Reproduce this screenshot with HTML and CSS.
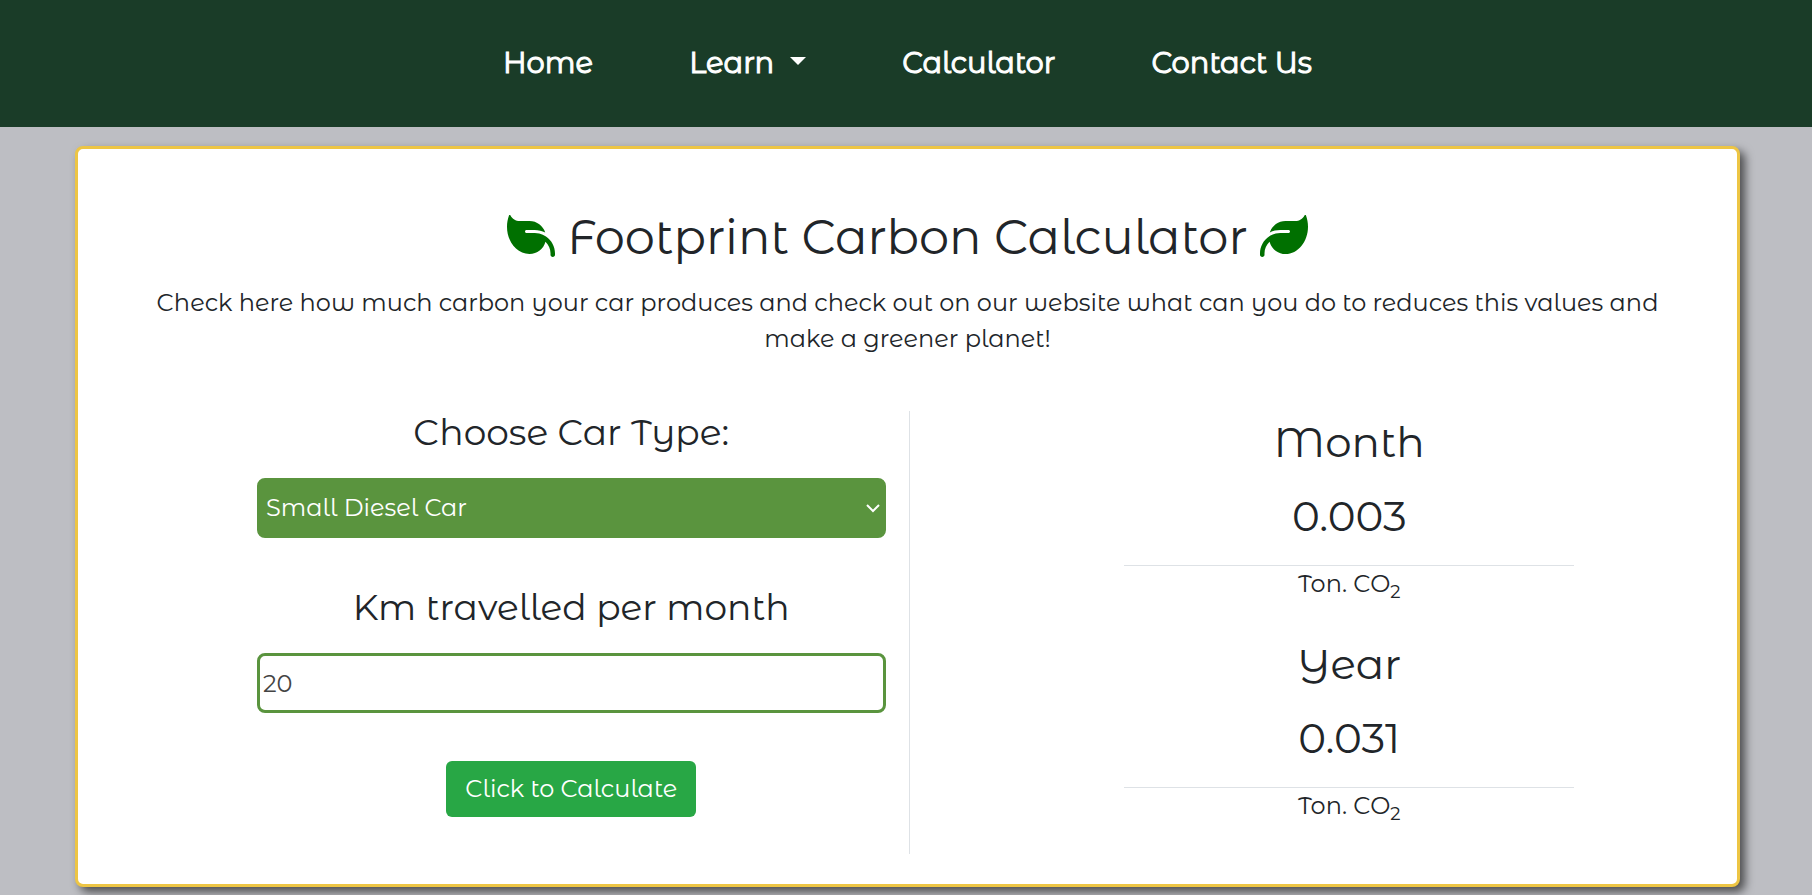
FILE: index.html
```html
<!DOCTYPE html>
<html lang="en">
<head>
<meta charset="utf-8">
<title>Footprint Carbon Calculator</title>
<link rel="stylesheet" href="styles.css">
</head>
<body>
<nav class="navbar">
  <a class="nav-link" href="#">Home</a>
  <a class="nav-link dropdown" href="#">Learn</a>
  <a class="nav-link" href="#">Calculator</a>
  <a class="nav-link" href="#">Contact Us</a>
</nav>
<main class="page">
  <section class="card">
    <h1 class="title">
      <svg class="leaf leaf-flipped" viewBox="0 0 512 512" aria-hidden="true"><path d="M272 96c-78.600 0-145.100 51.500-167.700 122.500c33.600-17 71.500-26.500 111.700-26.500h88c8.800 0 16 7.200 16 16s-7.200 16-16 16H216c-16.600 0-32.700 1.900-48.300 5.400c-25.900 5.900-49.900 16.400-71.400 30.700C38.300 298.800 0 364.900 0 440v16c0 13.300 10.700 24 24 24s24-10.700 24-24v-16c0-48.700 20.700-92.500 53.800-123.200C121.600 392.300 190.300 448 272 448l1 0c132.100-.7 239-130.900 239-291.400c0-42.600-7.500-83.100-21.100-119.600c-2.600-6.900-12.700-6.600-16.200-.1C455.900 72.100 418.700 96 376 96z"/></svg>
      <span>Footprint Carbon Calculator</span>
      <svg class="leaf" viewBox="0 0 512 512" aria-hidden="true"><path d="M272 96c-78.600 0-145.100 51.500-167.700 122.500c33.600-17 71.500-26.500 111.700-26.500h88c8.800 0 16 7.200 16 16s-7.200 16-16 16H216c-16.600 0-32.700 1.900-48.300 5.400c-25.900 5.900-49.900 16.400-71.400 30.700C38.300 298.800 0 364.900 0 440v16c0 13.300 10.700 24 24 24s24-10.700 24-24v-16c0-48.700 20.700-92.500 53.800-123.200C121.600 392.300 190.300 448 272 448l1 0c132.100-.7 239-130.900 239-291.400c0-42.600-7.500-83.100-21.100-119.600c-2.600-6.900-12.700-6.600-16.200-.1C455.900 72.100 418.700 96 376 96z"/></svg>
    </h1>
    <p class="intro">Check here how much carbon your car produces and check out on our website what can you do to reduces this values and make a greener planet!</p>
    <div class="columns">
      <form class="inputs">
        <label class="label" for="car">Choose Car Type:</label>
        <div class="select-wrap">
          <select class="field select" id="car"><option>Small Diesel Car</option></select>
          <svg class="chevron" viewBox="0 0 14 10" aria-hidden="true"><path d="M1 2l6 6 6-6"/></svg>
        </div>
        <label class="label" for="km">Km travelled per month</label>
        <input class="field number" id="km" type="number" value="20">
        <button class="submit" type="button">Click to Calculate</button>
      </form>
      <div class="results">
        <div class="result">
          <h2 class="period">Month</h2>
          <p class="amount">0.003</p>
          <p class="unit">Ton. CO<sub>2</sub></p>
        </div>
        <div class="result">
          <h2 class="period">Year</h2>
          <p class="amount">0.031</p>
          <p class="unit">Ton. CO<sub>2</sub></p>
        </div>
      </div>
    </div>
  </section>
</main>
</body>
</html>
```
FILE: styles.css
```css
* { box-sizing: border-box; }
body {
  margin: 0;
  background: #bdbec3;
  color: #212529;
  font-family: "Montserrat Alternates", Montserrat, Inter, sans-serif;
  font-size: 24px;
  font-weight: 400;
  line-height: 36px;
}
h1, h2, p { margin: 0; font-weight: 400; }

.navbar {
  display: flex;
  justify-content: center;
  align-items: center;
  gap: 96px;
  height: 127px;
  padding: 0 0 2px 3px;
  background: #1a3c28;
}
.nav-link {
  color: #fff;
  font-size: 29px;
  -webkit-text-stroke: 1px #fff;
  text-decoration: none;
}
.dropdown { display: flex; align-items: center; gap: 16px; }
.dropdown::after {
  content: "";
  margin-bottom: 4px;
  border: 8px solid transparent;
  border-top-color: #fff;
  border-bottom: 0;
}

.page { padding: 19px 72px 8px 75px; }
.card {
  padding: 59px 72px 30px;
  border: 3px solid #edc544;
  border-radius: 8px;
  background: #fff;
  box-shadow: 5px 5px 10px rgba(0, 0, 0, 0.6);
  text-align: center;
}
.title {
  display: flex;
  justify-content: center;
  align-items: center;
  gap: 12px;
  font-size: 48px;
  line-height: 58px;
}
.leaf { width: 48px; height: 48px; margin-bottom: 2px; fill: #007000; }
.leaf-flipped { transform: scaleX(-1); }
.intro { margin-top: 19px; }

.columns {
  display: grid;
  grid-template-columns: 1fr 1fr;
  margin-top: 54px;
  padding-left: 4px;
}
.inputs {
  display: flex;
  flex-direction: column;
  align-items: center;
  padding: 0 23px 37px 103px;
  border-right: 1px solid #dee2e6;
}
.label { font-size: 36px; line-height: 43px; }
.select-wrap { position: relative; width: 100%; }
.field {
  display: block;
  width: 100%;
  height: 60px;
  margin: 24px 0 48px;
  border: 3px solid #5a943e;
  border-radius: 8px;
  font: inherit;
}
.select { appearance: none; padding-left: 6px; background: #5a943e; color: #fff; }
.chevron {
  position: absolute;
  right: 6px;
  top: 49px;
  width: 14px;
  height: 10px;
  fill: none;
  stroke: #fff;
  stroke-width: 2;
}
.number { padding: 1px 3px; background: #fff; color: #444; }
.submit {
  width: 250px;
  height: 56px;
  border: 0;
  border-radius: 6px;
  background: #28a745;
  color: #fff;
  font: inherit;
}
.results {
  display: flex;
  flex-direction: column;
  align-items: center;
  gap: 36px;
  padding: 6px 0 0 124px;
}
.result { width: 450px; }
.period { font-size: 42px; line-height: 50px; }
.amount {
  padding: 24px 0;
  border-bottom: 1px solid #dee2e6;
  font-size: 42px;
  line-height: 50px;
}
.unit { padding-bottom: 1px; }
.unit sub { font-size: 18px; line-height: 0; }
```
